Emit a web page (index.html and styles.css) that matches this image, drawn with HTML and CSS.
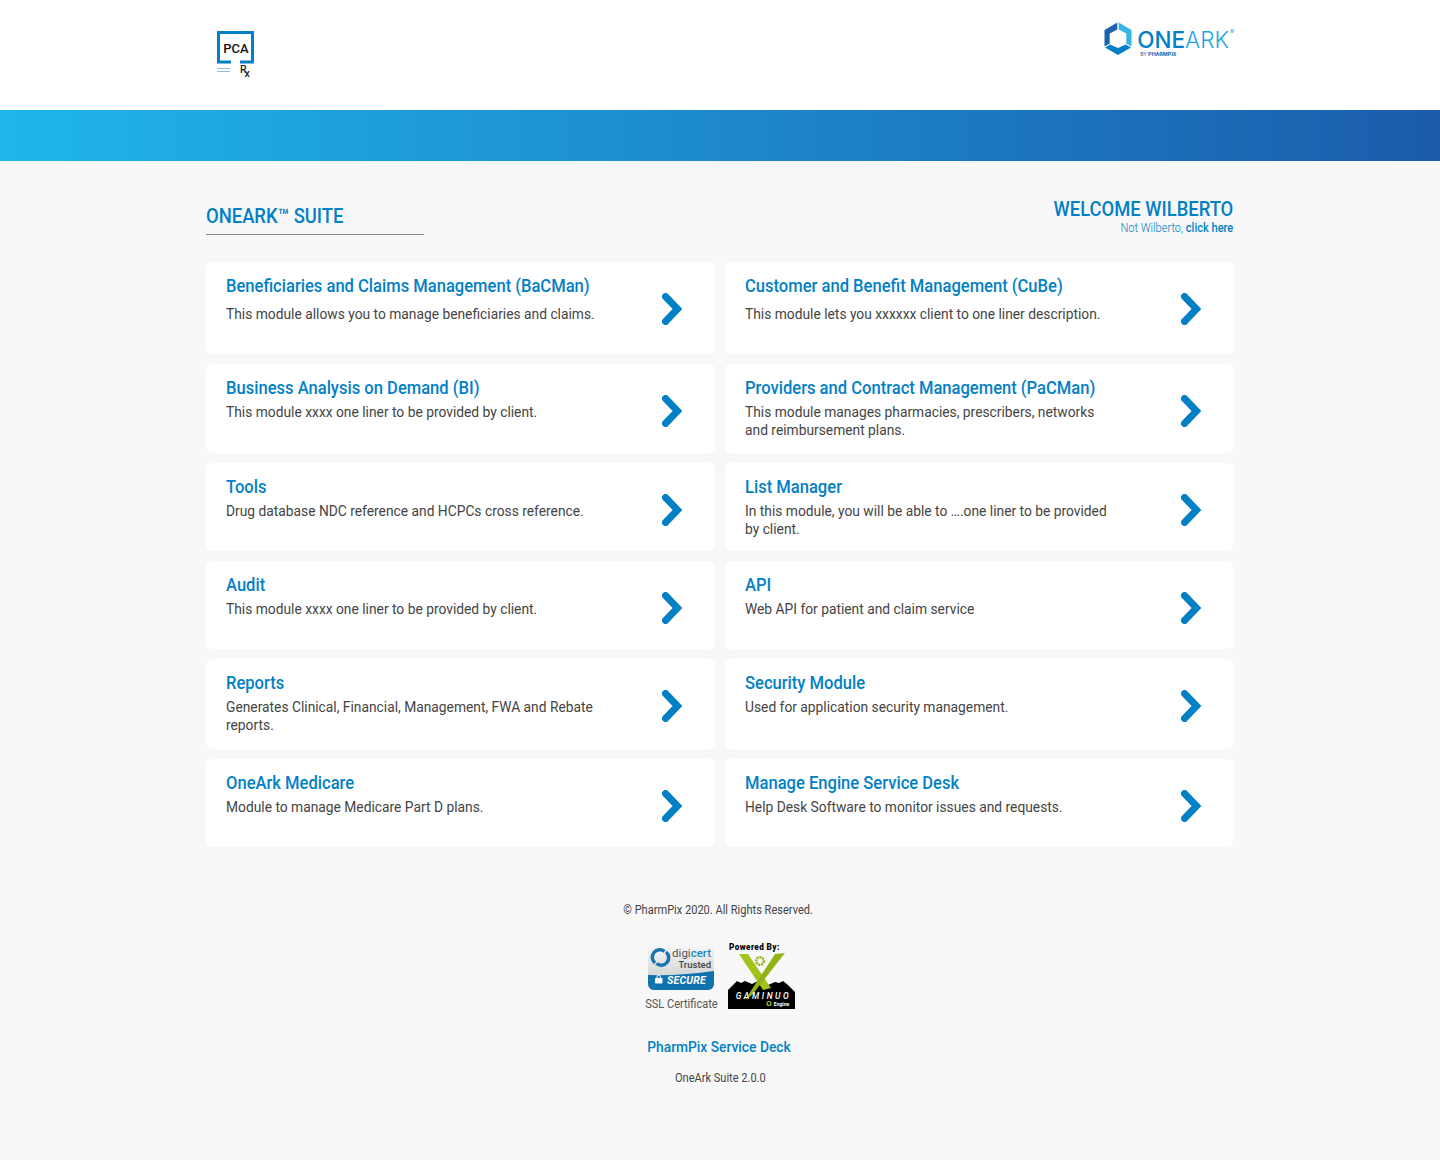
FILE: index.html
```html
<!DOCTYPE html>
<html lang="en">
<head>
<meta charset="utf-8">
<title>OneArk Suite</title>
<link rel="stylesheet" href="styles.css">
</head>
<body>
<svg class="defs" width="0" height="0" aria-hidden="true">
  <symbol id="chev" viewBox="0 0 22 32"><path d="M3.500 3.500 L15.500 16 L3.500 28.500" fill="none" stroke="#0280c6" stroke-width="7" stroke-linecap="round" stroke-linejoin="miter"/></symbol>
</svg>
<header class="top">
  <div class="wrap top-in">
    <svg class="pca" width="37" height="48" viewBox="0 0 37 48">
      <path d="M14 31 H1.500 V1.500 H35.500 V31 H23" fill="none" stroke="#0280c6" stroke-width="3"/>
      <text x="19" y="21.500" class="pca-t">PCA</text>
      <rect x="0" y="37" width="13" height="1" fill="#8fc1e0"/>
      <rect x="0" y="40" width="13" height="1" fill="#8fc1e0"/>
      <text x="23" y="42" class="pca-r">R<tspan dx="-2" dy="4">x</tspan></text>
    </svg>
    <div class="oa">
      <svg width="28" height="33" viewBox="0 0 28 33">
        <path d="M14.700 0.500 L27.500 8 V24.500 L22.300 21.500 V11.500 L14.700 7.500 Z" fill="#35b5e8"/>
        <path d="M13.300 0.500 L0.500 8 V24.500 L5.700 21.500 V11.500 L13.300 7.500 Z" fill="#1c62ae"/>
        <path d="M1 25.500 L14 33 L27 25.500 L21.800 22.500 L14 26 L6.200 22.500 Z" fill="#0280c6"/>
      </svg>
      <div class="oa-txt">
        <div class="oa-name"><b>ONE</b><span>ARK</span><sup>®</sup></div>
        <div class="oa-by">BY <b>PHARMPIX</b></div>
      </div>
    </div>
  </div>
</header>
<div class="band"></div>
<main class="wrap">
  <div class="head">
    <div class="suite"><h1>ONEARK™ SUITE</h1></div>
    <div class="welcome">
      <div class="w-name">WELCOME WILBERTO</div>
      <div class="w-sub">Not Wilberto, <b>click here</b></div>
    </div>
  </div>
  <div class="grid">
    <a class="card"><div class="body"><h2>Beneficiaries and Claims Management (BaCMan)</h2><p class="first">This module allows you to manage beneficiaries and claims.</p></div><svg class="chev"><use href="#chev"/></svg></a>
    <a class="card"><div class="body"><h2>Customer and Benefit Management (CuBe)</h2><p class="first">This module lets you xxxxxx client to one liner description.</p></div><svg class="chev"><use href="#chev"/></svg></a>
    <a class="card"><div class="body"><h2>Business Analysis on Demand (BI)</h2><p>This module xxxx one liner to be provided by client.</p></div><svg class="chev"><use href="#chev"/></svg></a>
    <a class="card"><div class="body"><h2>Providers and Contract Management (PaCMan)</h2><p>This module manages pharmacies, prescribers, networks and reimbursement plans.</p></div><svg class="chev"><use href="#chev"/></svg></a>
    <a class="card"><div class="body"><h2>Tools</h2><p>Drug database NDC reference and HCPCs cross reference.</p></div><svg class="chev"><use href="#chev"/></svg></a>
    <a class="card"><div class="body"><h2>List Manager</h2><p>In this module, you will be able to ….one liner to be provided by client.</p></div><svg class="chev"><use href="#chev"/></svg></a>
    <a class="card"><div class="body"><h2>Audit</h2><p>This module xxxx one liner to be provided by client.</p></div><svg class="chev"><use href="#chev"/></svg></a>
    <a class="card"><div class="body"><h2>API</h2><p>Web API for patient and claim service</p></div><svg class="chev"><use href="#chev"/></svg></a>
    <a class="card"><div class="body"><h2>Reports</h2><p>Generates Clinical, Financial, Management, FWA and Rebate reports.</p></div><svg class="chev"><use href="#chev"/></svg></a>
    <a class="card"><div class="body"><h2>Security Module</h2><p>Used for application security management.</p></div><svg class="chev"><use href="#chev"/></svg></a>
    <a class="card"><div class="body"><h2>OneArk Medicare</h2><p>Module to manage Medicare Part D plans.</p></div><svg class="chev"><use href="#chev"/></svg></a>
    <a class="card"><div class="body"><h2>Manage Engine Service Desk</h2><p>Help Desk Software to monitor issues and requests.</p></div><svg class="chev"><use href="#chev"/></svg></a>
  </div>
</main>
<footer class="foot">
  <div class="copy">© PharmPix 2020. All Rights Reserved.</div>
  <div class="badges">
    <div class="ssl">
      <svg width="66" height="47" viewBox="0 0 66 47">
        <defs><linearGradient id="sg" x1="0" y1="0" x2="0" y2="1"><stop offset="0" stop-color="#f8f8f8"/><stop offset="1" stop-color="#c4c8ca"/></linearGradient></defs>
        <rect width="66" height="47" rx="6" fill="url(#sg)"/>
        <path d="M0 32 Q33 33 66 28 V41 a6 6 0 0 1 -6 6 H6 a6 6 0 0 1 -6 -6 Z" fill="#0f73b0"/>
        <path d="M7 20 A7 7 0 0 1 16.500 8.500 M18 9 A7 7 0 0 1 8.500 20.500" fill="none" stroke="#1b74ad" stroke-width="3.500"/>
        <text x="63" y="13.700" class="dg"><tspan fill="#555">digi</tspan><tspan class="dg-c">cert</tspan></text>
        <text x="63" y="25" class="dg-t">Trusted</text>
        <rect x="7" y="35" width="7.500" height="5.500" rx="1" fill="#fff"/>
        <path d="M9 35 V33.800 a1.700 1.700 0 0 1 3.400 0 V35" fill="none" stroke="#fff"/>
        <text x="19" y="40.500" class="dg-s">SECURE</text>
      </svg>
      <div class="ssl-t">SSL Certificate</div>
    </div>
    <svg class="gam" width="67" height="66" viewBox="0 0 67 66">
      <text x="1" y="7" class="g-p">Powered By:</text>
      <path d="M0 66 V47 L9 38 L13 40 L17 38 L24 41 L30 38 L40 42 L47 39 L51 40 L55 38 L60 42 L67 49 V66 Z" fill="#000"/>
      <path d="M11 11 L20 11 L43 45 L35 47 Z" fill="#a2c31c"/>
      <path d="M47 11 L57 10 L24 52 L17 57 Z" fill="#8fb414"/>
      <circle cx="32" cy="18" r="3.800" fill="none" stroke="#9ab51c" stroke-width="2.600" stroke-dasharray="2 .8"/>
      <text x="35.500" y="56" class="g-n">GAMINUO</text>
      <circle cx="41" cy="60.500" r="2" fill="none" stroke="#a2c31c" stroke-width="1.200"/>
      <text x="53.500" y="62.500" class="g-e">Engine</text>
    </svg>
  </div>
  <a class="deck">PharmPix Service Deck</a>
  <div class="ver">OneArk Suite 2.0.0</div>
</footer>
</body>
</html>
```
FILE: styles.css
```css
* { box-sizing: border-box; }
html, body { margin: 0; padding: 0; }
body {
  background: #f8f8f8;
  font-family: Roboto, "Liberation Sans", sans-serif;
  color: #444;
  min-height: 1160px;
}
.defs { position: absolute; }
.wrap { width: 1027px; margin: 0 0 0 206px; }
.top { background: #fff; height: 110px; }
.top-in { display: flex; justify-content: space-between; align-items: flex-start; }
.pca { margin: 31px 0 0 11px; display: block; }
.pca-t { font: 500 13px Roboto, sans-serif; fill: #111; text-anchor: middle; }
.pca-r { font: 500 10.500px Roboto, sans-serif; fill: #222; }
.oa { display: flex; gap: 5px; margin-top: 22px; margin-right: -1px; }
.oa-txt { display: flex; flex-direction: column; }
.oa-name { font-family: Inter, Roboto, sans-serif; font-size: 22.500px; line-height: 26px; color: #0280c6; display: flex; margin-top: 5px; }
.oa-name b { font-weight: 500; }
.oa-name span { font-weight: 300; color: #1ea7e1; }
.oa-name sup { font-size: 6px; line-height: 10px; color: #1ea7e1; margin: 0 0 0 1px; }
.oa-by { font-size: 5.500px; line-height: 6px; color: #1c62ae; margin: -2px 0 0 3px; }
.band { height: 51px; background: linear-gradient(90deg, #1fb6ea 0%, #1b5cab 100%); }
.head { display: flex; justify-content: space-between; align-items: flex-start; height: 101px; padding-top: 36px; }
.suite {
  margin: 5px 0 0;
  width: 218px;
  height: 33px;
  border-bottom: 1px solid #888;
}
.suite h1 {
  margin: 0;
  width: 237px;
  font-size: 20px;
  font-weight: 500;
  line-height: 28px;
  color: #0280c6;
  transform: scaleX(.92);
  transform-origin: 0 0;
}
.welcome { text-align: right; transform: scaleX(.92); transform-origin: 100% 0; }
.w-name { font-size: 20px; font-weight: 500; line-height: 24px; color: #0280c6; }
.w-sub { font-size: 12px; font-weight: 300; line-height: 14px; color: #0280c6; }
.w-sub b { font-weight: 500; }
.grid {
  display: grid;
  grid-template-columns: 509px 508px;
  grid-template-rows: 92px 89px 88px 88px 90px 88px;
  gap: 10px;
}
.card {
  display: flex;
  justify-content: space-between;
  align-items: flex-start;
  background: #fff;
  border-radius: 6px;
  padding: 12px 31px 0 20px;
}
.card:nth-child(even) { padding-right: 30px; }
.body { width: 372px; }
.card h2, .card p { width: 404px; transform: scaleX(.92); transform-origin: 0 0; }
.card h2 {
  margin: 0;
  font-size: 18px;
  font-weight: 500;
  line-height: 24px;
  color: #0280c6;
  white-space: nowrap;
}
.card p { margin: 3px 0 0; font-size: 15px; line-height: 18px; color: #444; }
.card p.first { margin-top: 7px; }
.chev { width: 22px; height: 32px; margin-top: 19px; flex: none; }
.foot { display: flex; flex-direction: column; align-items: center; padding-top: 56px; }
.copy, .ssl-t, .deck, .ver { transform: scaleX(.92); }
.copy { font-size: 12px; line-height: 14px; margin-left: -3px; color: #444; }
.badges { display: flex; gap: 10px; align-items: flex-start; margin: 26px 0 0 -2px; }
.ssl { display: flex; flex-direction: column; align-items: center; width: 74px; }
.ssl svg { display: block; }
.ssl-t { font-size: 12px; line-height: 14px; margin: 7px 0 0 2px; white-space: nowrap; color: #555; }
.dg { font: 400 11.500px Roboto, sans-serif; text-anchor: end; }
.dg-c { fill: #1a86c8; font-weight: 500; }
.dg-t { font: 500 9.500px Roboto, sans-serif; fill: #444; text-anchor: end; }
.dg-s { font: italic 700 10.500px Roboto, sans-serif; fill: #fff; letter-spacing: .2px; }
.gam { display: block; }
.g-p { font: 900 8.200px Roboto, sans-serif; fill: #000; letter-spacing: .4px; }
.g-n { font: italic 500 8.500px Roboto, sans-serif; fill: #fff; text-anchor: middle; letter-spacing: 2.600px; }
.g-e { font: 700 5px Roboto, sans-serif; fill: #fff; text-anchor: middle; }
.deck { margin-top: 26px; font-size: 15px; font-weight: 500; line-height: 20px; color: #0280c6; margin-left: -2px; }
.ver { margin-top: 14px; font-size: 12px; line-height: 14px; color: #444; }
```
